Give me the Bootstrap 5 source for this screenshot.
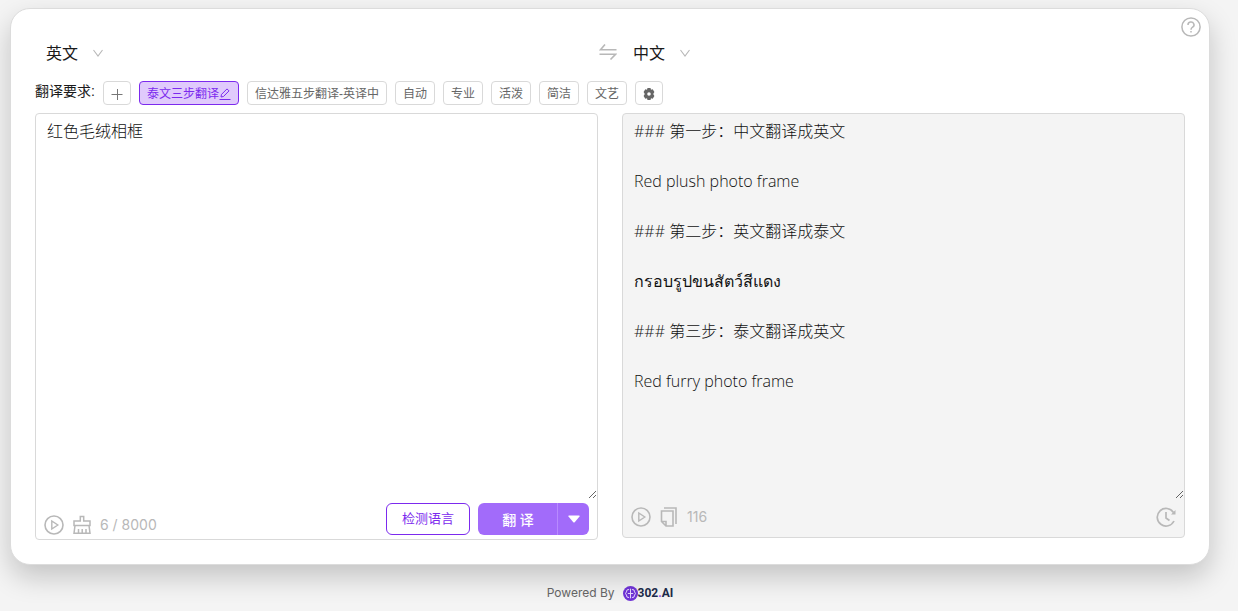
<!DOCTYPE html>
<html lang="zh-CN">
<head>
<meta charset="utf-8">
<meta name="viewport" content="width=device-width, initial-scale=1">
<title>翻译</title>
<link href="https://cdn.jsdelivr.net/npm/bootstrap@5.3.0/dist/css/bootstrap.min.css" rel="stylesheet">
<style>
  :root { --violet: #7c2aee; --line: #d9d9d9; --mute: #b8b8b8; }
  body { background: #f4f4f4; color: #1a1a1a; font-family: Inter, "Noto Sans CJK SC", sans-serif; font-size: 14px; }
  .page { padding: 8px 28px 0 10px; }
  .panel { background: #fff; border: 1px solid #dcdcdc; border-radius: 20px; padding: 28px 24px 24px; box-shadow: 0 12px 28px rgba(0,0,0,.2); }
  .help { top: 8px; right: 8px; color: var(--mute); }
  .halves { display: grid; grid-template-columns: 1fr 1fr; column-gap: 24px; }
  .lang { width: 80px; height: 32px; padding: 0 0 0 11px; border: 0; font-size: 16px; line-height: 32px; color: #1a1a1a; background-color: transparent;
    background-image: url("data:image/svg+xml,%3Csvg xmlns='http://www.w3.org/2000/svg' viewBox='0 0 12 12'%3E%3Cpath d='M1.500 3l4.500 6 4.500-6' fill='none' stroke='%23b8b8b8' stroke-width='1.100'/%3E%3C/svg%3E"); background-size: 12px; background-position: right 11px center; }
  .iconbtn { display: inline-flex; padding: 0; border: 0; background: none; color: var(--mute); }
  .swap { margin-right: -19px; }
  .req { height: 24px; margin: 12px 0 8px; font-family: "Liberation Sans", "Noto Sans CJK SC", sans-serif; }
  .req-label { line-height: 20px; margin-bottom: 4px; }
  .chip { height: 24px; padding: 2px 7px 0; border: 1px solid var(--line); border-radius: 4px; background: #fff; color: #666; font-size: 12px; line-height: 20px; display: inline-flex; align-items: center; justify-content: center; white-space: nowrap; }
  .chip-on { background: #e0cafc; border-color: var(--violet); color: var(--violet); }
  .chip-icon { width: 28px; padding: 2px 0 0; }
  .box { border: 1px solid var(--line); border-radius: 4px; background: #fff; }
  .box-out { background: #f4f4f4; }
  .words { display: block; width: 100%; height: 385px; padding: 5px 11px; border: 0; background: transparent; resize: vertical; outline: 0; color: #111; font: 300 16px/25px "Open Sans", "Noto Sans CJK SC", sans-serif; }
  .tools { padding: 0 8px; color: var(--mute); font-size: 14px; line-height: 20px; }
  .tools-in { height: 40px; }
  .tools-out { height: 38px; padding-bottom: 2px; }
  .act { height: 32px; border-radius: 6px; font-size: 13px; padding: 0; }
  .detect, .detect:hover { width: 84px; border: 1px solid var(--violet); color: var(--violet); background: #fff; }
  .go, .go:hover, .more, .more:hover { background: #a26bfa; color: #fff; }
  .go { width: 80px; font-size: 14px; font-weight: 500; }
  .more { width: 32px; border: 0; border-left: 1px solid #b88aff; }
  .foot { margin-top: 18px; font-size: 12px; line-height: 20px; color: #666; }
  .brand { color: #1c2b4a; font-family: Roboto, sans-serif; font-weight: 700; text-decoration: none; }
  .brand-dot { color: #a050f0; }
</style>
</head>
<body>
<svg class="d-none">
  <symbol id="play" viewBox="0 0 20 20" fill="none" stroke="currentColor" stroke-width="1.6"><circle cx="10" cy="10" r="9"/><path d="M7.800 6v8l6-4z" stroke-width="1.400"/></symbol>
</svg>
<main class="page">
  <section class="panel position-relative">
    <button class="iconbtn help position-absolute" aria-label="帮助"><svg width="20" height="20" viewBox="0 0 20 20" fill="none" stroke="currentColor" stroke-width="1.5"><circle cx="10" cy="10" r="9.100"/><path d="M7 8a3 2.800 0 1 1 4.600 2.200Q10 11.200 10 12.700M10 14v1.600"/></svg></button>
    <div class="halves">
      <div class="d-flex align-items-center justify-content-between">
        <select class="form-select lang" aria-label="源语言"><option>英文</option><option>中文</option></select>
        <button class="iconbtn swap" aria-label="交换语言"><svg width="18" height="18" viewBox="0 0 18 18" fill="none" stroke="currentColor" stroke-width="1.600"><path d="M6 .5L1.500 5.700H17.500M.5 10.300H16.500L11.500 15.500"/></svg></button>
      </div>
      <div><select class="form-select lang" aria-label="目标语言"><option>中文</option><option>英文</option></select></div>
    </div>
    <div class="req d-flex align-items-center gap-2">
      <span class="req-label">翻译要求:</span>
      <button class="chip chip-icon" aria-label="添加"><svg width="12" height="12" viewBox="0 0 12 12" stroke="#777" stroke-width="1"><path d="M.5 6.500h11M6.500 1v11"/></svg></button>
      <button class="chip chip-on">泰文三步翻译<svg width="12" height="12" viewBox="0 0 12 12" fill="none" stroke="currentColor"><path d="M2 9l.5-2.600L8 .9l2 2-5.500 5.600zM.5 11.500h11"/></svg></button>
      <button class="chip">信达雅五步翻译-英译中</button>
      <button class="chip">自动</button>
      <button class="chip">专业</button>
      <button class="chip">活泼</button>
      <button class="chip">简洁</button>
      <button class="chip">文艺</button>
      <button class="chip chip-icon" aria-label="设置"><svg width="12" height="12" viewBox="0 0 12 12"><path fill="#666" fill-rule="evenodd" d="M4.500 0h3l.5 1.700 1.700-.4 1.700 2.700L10.200 6l1.200 2-1.700 2.700-1.700-.4-.5 1.700h-3L4 10.300l-1.700.4L.6 8l1.200-2L.6 4l1.700-2.700 1.700.4zM6 4.200a1.800 1.800 0 1 0 0 3.600 1.800 1.800 0 0 0 0-3.600z"/></svg></button>
    </div>
    <div class="halves align-items-start">
      <div class="box">
        <textarea class="words" aria-label="原文" spellcheck="false">红色毛绒相框</textarea>
        <div class="tools tools-in d-flex align-items-start justify-content-between">
          <div class="d-flex align-items-center gap-2 pt-3">
            <button class="iconbtn" aria-label="朗读"><svg width="20" height="20"><use href="#play"/></svg></button>
            <button class="iconbtn" aria-label="清空"><svg width="20" height="20" viewBox="0 0 20 20" fill="none" stroke="currentColor" stroke-width="1.500"><path d="M8.300 6V1.500h3.400V6H18v4.500H2V6zM3 10.500L2 18.200h16l-1-7.700M6.500 18v-4M10.200 18v-4M14 18v-4"/></svg></button>
            <span>6 / 8000</span>
          </div>
          <div class="d-flex gap-2 pt-1">
            <button class="btn act detect">检测语言</button>
            <div class="btn-group"><button class="btn act go">翻 译</button><button class="btn act more" aria-label="更多"><svg class="d-block mx-auto" width="12" height="8" viewBox="0 0 12 8"><path fill="#fff" d="M1 .5h10q1 .2.500 1L6.700 7.200q-.7.700-1.400 0L.5 1.500Q0 .7 1 .5z"/></svg></button></div>
          </div>
        </div>
      </div>
      <div class="box box-out">
        <textarea class="words" aria-label="译文" spellcheck="false" readonly>### 第一步：中文翻译成英文

Red plush photo frame

### 第二步：英文翻译成泰文

กรอบรูปขนสัตว์สีแดง

### 第三步：泰文翻译成英文

Red furry photo frame</textarea>
        <div class="tools tools-out d-flex align-items-center justify-content-between">
          <div class="d-flex align-items-center gap-2">
            <button class="iconbtn" aria-label="朗读"><svg width="20" height="20"><use href="#play"/></svg></button>
            <button class="iconbtn" aria-label="复制"><svg width="20" height="20" viewBox="0 0 20 20" fill="none" stroke="currentColor" stroke-width="1.600"><path d="M5 1h12v16M2.500 4h11.500v15H7L2.500 14.500zM2.500 14.500H7V19"/></svg></button>
            <span>116</span>
          </div>
          <button class="iconbtn" aria-label="历史"><svg width="20" height="20" viewBox="0 0 20 20" fill="none" stroke="currentColor" stroke-width="1.700"><path d="M17.500 5.500A8.800 8.800 0 1 0 18 14M10 5v6l3.500 2.500"/><path d="M19.500 3v4.500H15z" fill="currentColor" stroke="none"/></svg></button>
        </div>
      </div>
    </div>
  </section>
  <footer class="foot d-flex justify-content-center align-items-center gap-2">
    <span>Powered By</span>
    <a class="brand d-flex align-items-center" href="#"><svg width="15" height="15" viewBox="0 0 14 14"><circle cx="7" cy="7" r="7" fill="#7134d8"/><path d="M7 2.500v9M5.700 3.200Q3 3 3.200 5.500 1.500 7 3.200 8.500 3 11 5.700 10.800M8.300 3.200Q11 3 10.800 5.500 12.500 7 10.800 8.500 11 11 8.300 10.800M4.500 7h5" fill="none" stroke="#eadcff" stroke-width=".9"/></svg><span>302<span class="brand-dot">.</span>AI</span></a>
  </footer>
</main>
<script src="https://cdn.jsdelivr.net/npm/bootstrap@5.3.0/dist/js/bootstrap.bundle.min.js"></script>
</body>
</html>
